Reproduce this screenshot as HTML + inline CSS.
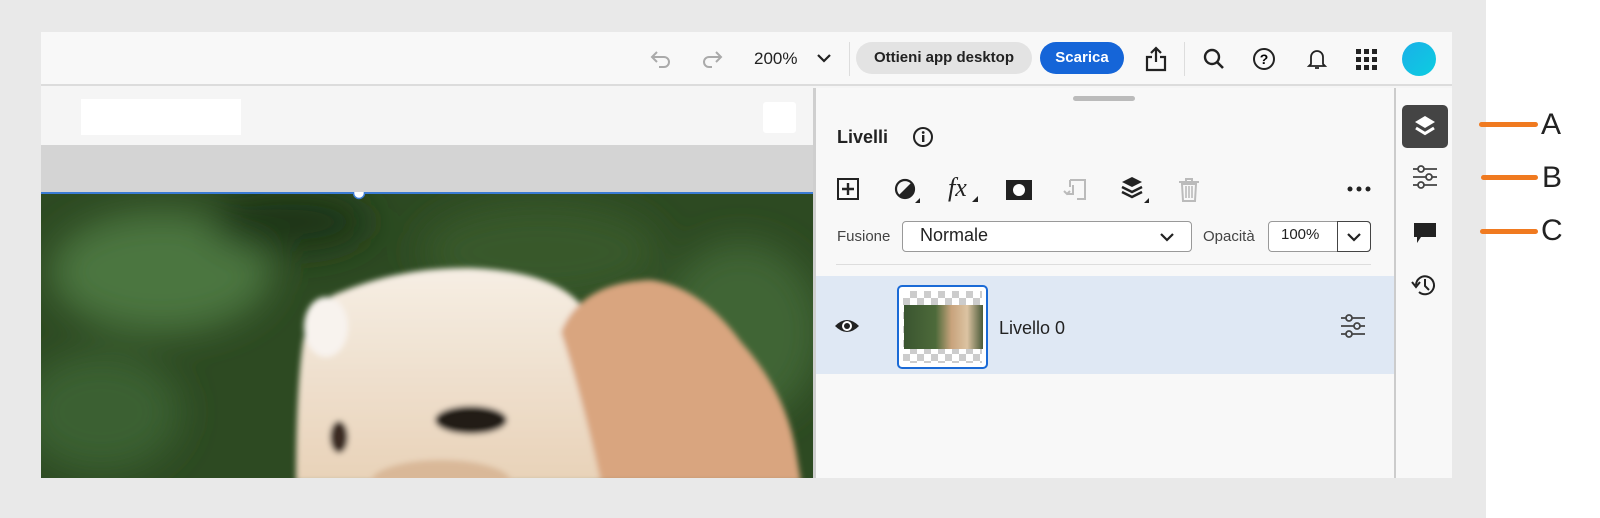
<!DOCTYPE html>
<html><head><meta charset="utf-8">
<style>
*{margin:0;padding:0;box-sizing:border-box}
body{width:1600px;height:518px;background:#fff;font-family:"Liberation Sans",sans-serif;position:relative;overflow:hidden;color:#222}
.gray{position:absolute;left:0;top:0;width:1486px;height:518px;background:#e9e9e9}
.frame{position:absolute;left:41px;top:32px;width:1411px;height:446px;background:#f5f5f5}
.tb{position:absolute;left:0;top:0;width:1411px;height:54px;background:#f8f8f8;border-bottom:2px solid #dcdcdc}
.ab{position:absolute}
.btn{position:absolute;top:10px;height:32px;border-radius:16px;font-weight:bold;font-size:15px;line-height:32px;text-align:center}
.t{position:absolute;white-space:nowrap}
</style></head><body>
<div class="gray"></div>
<div class="frame">
 <div class="tb">
  <svg class="ab" style="left:608px;top:16px" width="24" height="22" viewBox="0 0 24 22"><path d="M8 4 L3 9 L8 14 M3 9 H15 A5 5 0 0 1 15 19 H10" fill="none" stroke="#aaa" stroke-width="2"/></svg>
  <svg class="ab" style="left:659px;top:16px" width="24" height="22" viewBox="0 0 24 22"><path d="M16 4 L21 9 L16 14 M21 9 H9 A5 5 0 0 0 9 19 H12" fill="none" stroke="#aaa" stroke-width="2"/></svg>
  <div class="t" style="left:713px;top:17px;font-size:17px">200%</div>
  <svg class="ab" style="left:775px;top:20px" width="16" height="12" viewBox="0 0 16 12"><path d="M2 3 L8 9 L14 3" fill="none" stroke="#222" stroke-width="2.2"/></svg>
  <div class="ab" style="left:808px;top:10px;width:1px;height:34px;background:#ddd"></div>
  <div class="btn" style="left:815px;width:176px;background:#e3e3e3;color:#222">Ottieni app desktop</div>
  <div class="btn" style="left:999px;width:84px;background:#1565d8;color:#fff">Scarica</div>
  <svg class="ab" style="left:1102px;top:13px" width="26" height="28" viewBox="0 0 26 28"><path d="M13 3 V17 M8 8 L13 3 L18 8 M9 12 H4 V25 H22 V12 H17" fill="none" stroke="#222" stroke-width="2.2"/></svg>
  <div class="ab" style="left:1143px;top:10px;width:1px;height:34px;background:#ddd"></div>
  <svg class="ab" style="left:1161px;top:15px" width="24" height="24" viewBox="0 0 24 24"><circle cx="10" cy="10" r="7" fill="none" stroke="#222" stroke-width="2.4"/><path d="M15 15 L21 21" stroke="#222" stroke-width="2.6"/></svg>
  <svg class="ab" style="left:1211px;top:15px" width="24" height="24" viewBox="0 0 24 24"><circle cx="12" cy="12" r="10" fill="none" stroke="#222" stroke-width="2"/><text x="12" y="17" font-size="14" font-weight="bold" text-anchor="middle" font-family="Liberation Sans">?</text></svg>
  <svg class="ab" style="left:1264px;top:15px" width="24" height="24" viewBox="0 0 24 24"><path d="M6 17 V10 A6 6 0 0 1 18 10 V17 L20 19 H4 Z M10 21 H14" fill="none" stroke="#222" stroke-width="1.8"/></svg>
  <svg class="ab" style="left:1314px;top:16px" width="24" height="24" viewBox="0 0 24 24"><g fill="#222"><rect x="1" y="1" width="5" height="5"/><rect x="9" y="1" width="5" height="5"/><rect x="17" y="1" width="5" height="5"/><rect x="1" y="9" width="5" height="5"/><rect x="9" y="9" width="5" height="5"/><rect x="17" y="9" width="5" height="5"/><rect x="1" y="17" width="5" height="5"/><rect x="9" y="17" width="5" height="5"/><rect x="17" y="17" width="5" height="5"/></g></svg>
  <div class="ab" style="left:1361px;top:10px;width:34px;height:34px;border-radius:50%;background:linear-gradient(135deg,#1ab0e8,#0ccde0)"></div>
 </div>
 <div class="ab" style="left:0;top:56px;width:772px;height:57px;background:#f5f5f5"></div>
 <div class="ab" style="left:40px;top:67px;width:160px;height:36px;background:#fff"></div>
 <div class="ab" style="left:722px;top:70px;width:33px;height:31px;background:#fff;border-radius:3px"></div>
 <div class="ab" style="left:0;top:113px;width:772px;height:47px;background:#d4d4d4"></div>
 <svg class="ab" style="left:0;top:160px" width="772" height="286" viewBox="0 0 772 286">
  <defs><filter id="b"><feGaussianBlur stdDeviation="18"/></filter><filter id="s"><feGaussianBlur stdDeviation="3"/></filter>
  <linearGradient id="hg" x1="0" y1="0" x2="0" y2="1"><stop offset="0" stop-color="#f6eee4"/><stop offset="1" stop-color="#e8d2b8"/></linearGradient></defs>
  <rect width="772" height="286" fill="#2d4a22"/>
  <g filter="url(#b)">
   <ellipse cx="120" cy="80" rx="110" ry="60" fill="#4c7640"/>
   <ellipse cx="60" cy="220" rx="80" ry="60" fill="#3a6030"/>
   <ellipse cx="500" cy="60" rx="120" ry="50" fill="#37582c"/>
   <ellipse cx="700" cy="140" rx="80" ry="90" fill="#3f6535"/>
   <ellipse cx="250" cy="30" rx="80" ry="30" fill="#1e3518"/>
  </g>
  <g filter="url(#s)">
   <path d="M255 290 Q255 200 262 150 Q270 110 300 100 Q360 75 430 76 Q520 80 545 120 L560 290 Z" fill="url(#hg)"/>
   <path d="M520 140 Q540 90 610 88 Q660 95 700 150 Q745 200 755 260 L760 290 L560 290 Q540 200 520 140Z" fill="#d9a57f"/>
   <ellipse cx="285" cy="135" rx="22" ry="30" fill="#f8f3ee"/>
   <ellipse cx="430" cy="228" rx="36" ry="14" fill="#241a16"/>
   <ellipse cx="298" cy="245" rx="9" ry="16" fill="#3a2a22"/>
   <ellipse cx="400" cy="290" rx="70" ry="22" fill="#d9b898"/>
  </g>
  <rect y="0" width="772" height="2" fill="#3b7bd4"/>
  <circle cx="318" cy="1" r="5.5" fill="#fff" stroke="#3b7bd4" stroke-width="1.5"/>
 </svg>
 <div class="ab" style="left:772px;top:56px;width:3px;height:390px;background:#cfcfcf"></div>
 <div class="ab" style="left:775px;top:56px;width:578px;height:390px;background:#f8f8f8"></div>
 <div class="ab" style="left:1032px;top:64px;width:62px;height:5px;border-radius:3px;background:#bbb"></div>
 <div class="t" style="left:796px;top:95px;font-size:18px;font-weight:bold">Livelli</div>
 <svg class="ab" style="left:871px;top:94px" width="22" height="22" viewBox="0 0 22 22"><circle cx="11" cy="11" r="9" fill="none" stroke="#222" stroke-width="2"/><rect x="10" y="9" width="2.4" height="7" fill="#222"/><circle cx="11.2" cy="6.5" r="1.4" fill="#222"/></svg>
 <svg class="ab" style="left:795px;top:145px" width="24" height="24" viewBox="0 0 24 24"><rect x="2" y="2" width="20" height="20" fill="none" stroke="#222" stroke-width="2"/><path d="M12 6 V18 M6 12 H18" stroke="#222" stroke-width="2.4"/></svg>
 <svg class="ab" style="left:852px;top:145px" width="30" height="28" viewBox="0 0 30 28"><circle cx="12" cy="12" r="9" fill="none" stroke="#222" stroke-width="2.2"/><path d="M5.6 18.4 A9 9 0 0 0 18.4 5.6 Z" fill="#222"/><path d="M22 26 L27 26 L27 21 Z" fill="#222"/></svg>
 <div class="t" style="left:907px;top:141px;font-size:26px;font-style:italic;font-family:'Liberation Serif',serif">fx</div>
 <svg class="ab" style="left:930px;top:163px" width="8" height="8" viewBox="0 0 8 8"><path d="M1 7 L7 7 L7 1Z" fill="#222"/></svg>
 <svg class="ab" style="left:964px;top:147px" width="28" height="22" viewBox="0 0 28 22"><rect x="1" y="1" width="26" height="20" fill="#222"/><circle cx="14" cy="11" r="6" fill="#fff"/></svg>
 <svg class="ab" style="left:1021px;top:145px" width="26" height="26" viewBox="0 0 26 26"><path d="M8 3 H23 V22 H15 M8 3 V10 M11 8 V17 H5 M2 14 L5 17 L8 14" fill="none" stroke="#bbb" stroke-width="2"/></svg>
 <svg class="ab" style="left:1079px;top:143px" width="30" height="30" viewBox="0 0 30 30"><path d="M12 2 L22 7 L12 12 L2 7 Z" fill="#222"/><path d="M2 12 L12 17 L22 12 M2 17 L12 22 L22 17" fill="none" stroke="#222" stroke-width="2.5"/><path d="M24 28 L29 28 L29 23 Z" fill="#222"/></svg>
 <svg class="ab" style="left:1137px;top:145px" width="22" height="26" viewBox="0 0 22 26"><path d="M1 5 H21 M8 5 V2 H14 V5 M4 7 L5 24 H17 L18 7 Z" fill="none" stroke="#bbb" stroke-width="2"/><path d="M8 9 V21 M11 9 V21 M14 9 V21" stroke="#bbb" stroke-width="1.6"/></svg>
 <svg class="ab" style="left:1306px;top:153px" width="24" height="8" viewBox="0 0 24 8"><circle cx="3" cy="4" r="2.5" fill="#222"/><circle cx="12" cy="4" r="2.5" fill="#222"/><circle cx="21" cy="4" r="2.5" fill="#222"/></svg>
 <div class="t" style="left:796px;top:196px;font-size:15px;color:#444">Fusione</div>
 <div class="ab" style="left:861px;top:189px;width:290px;height:31px;border:1.5px solid #999;border-radius:4px;background:#fff"></div>
 <div class="t" style="left:879px;top:193px;font-size:18px">Normale</div>
 <svg class="ab" style="left:1118px;top:199px" width="16" height="12" viewBox="0 0 16 12"><path d="M2 3 L8 9 L14 3" fill="none" stroke="#222" stroke-width="2.2"/></svg>
 <div class="t" style="left:1162px;top:196px;font-size:15px;color:#444">Opacità</div>
 <div class="ab" style="left:1227px;top:189px;width:103px;height:31px;border:1.5px solid #999;border-radius:4px;background:#fff"></div>
 <div class="ab" style="left:1296px;top:189px;width:34px;height:31px;border:1.5px solid #444;border-radius:0 4px 4px 0"></div>
 <div class="t" style="left:1240px;top:194px;font-size:15px">100%</div>
 <svg class="ab" style="left:1305px;top:199px" width="16" height="12" viewBox="0 0 16 12"><path d="M2 3 L8 9 L14 3" fill="none" stroke="#222" stroke-width="2.2"/></svg>
 <div class="ab" style="left:795px;top:232px;width:535px;height:1px;background:#ddd"></div>
 <div class="ab" style="left:775px;top:244px;width:578px;height:98px;background:#dfe8f4"></div>
 <svg class="ab" style="left:793px;top:285px" width="26" height="18" viewBox="0 0 26 18"><path d="M1 9 Q13 -3 25 9 Q13 21 1 9Z" fill="#222"/><circle cx="13" cy="9" r="5" fill="#fff"/><circle cx="13" cy="9" r="3" fill="#222"/></svg>
 <div class="ab" style="left:856px;top:253px;width:91px;height:84px;border:2px solid #1a6ad6;border-radius:5px;background:#fff;overflow:hidden">
  <div style="position:absolute;left:4px;top:4px;width:79px;height:72px;background:repeating-conic-gradient(#ccc 0 25%,#fff 0 50%) 0 0/14px 14px"></div>
  <div style="position:absolute;left:5px;top:18px;width:79px;height:44px;background:linear-gradient(90deg,#3a5530 0%,#4d6a3a 40%,#c8a37c 60%,#dcc3a2 80%,#4a5a38 100%)"></div>
 </div>
 <div class="t" style="left:958px;top:286px;font-size:18px">Livello 0</div>
 <svg class="ab" style="left:1299px;top:282px" width="26" height="24" viewBox="0 0 26 24"><g fill="none" stroke="#444" stroke-width="1.8"><path d="M1 4 H25 M1 12 H25 M1 20 H25"/><circle cx="9" cy="4" r="3" fill="#dfe8f4"/><circle cx="17" cy="12" r="3" fill="#dfe8f4"/><circle cx="9" cy="20" r="3" fill="#dfe8f4"/></g></svg>
 <div class="ab" style="left:1353px;top:56px;width:2px;height:390px;background:#ccc"></div>
 <div class="ab" style="left:1355px;top:56px;width:56px;height:390px;background:#f8f8f8"></div>
 <div class="ab" style="left:1361px;top:73px;width:46px;height:43px;border-radius:5px;background:#444"></div>
 <svg class="ab" style="left:1372px;top:82px" width="24" height="26" viewBox="0 0 24 26"><path d="M12 2 L22 8 L12 14 L2 8 Z" fill="#fff"/><path d="M3 14 L12 19.5 L21 14" fill="none" stroke="#fff" stroke-width="3"/></svg>
 <svg class="ab" style="left:1371px;top:133px" width="26" height="24" viewBox="0 0 26 24"><g fill="none" stroke="#444" stroke-width="1.8"><path d="M1 4 H25 M1 12 H25 M1 20 H25"/><circle cx="9" cy="4" r="3" fill="#f8f8f8"/><circle cx="17" cy="12" r="3" fill="#f8f8f8"/><circle cx="9" cy="20" r="3" fill="#f8f8f8"/></g></svg>
 <svg class="ab" style="left:1371px;top:189px" width="26" height="24" viewBox="0 0 26 24"><path d="M2 2 H24 V16 H9 L5 22 V16 H2 Z" fill="#222"/></svg>
 <svg class="ab" style="left:1370px;top:240px" width="28" height="26" viewBox="0 0 28 26"><path d="M5 13 A9 9 0 1 1 8 20" fill="none" stroke="#222" stroke-width="2"/><path d="M1 10 L5 15 L9 10" fill="none" stroke="#222" stroke-width="2"/><path d="M14 7 V14 L18 18" fill="none" stroke="#222" stroke-width="2"/></svg>
</div>
<div class="ab" style="left:1479px;top:122px;width:59px;height:5px;border-radius:3px;background:#f07a20"></div>
<div class="ab" style="left:1481px;top:175px;width:57px;height:5px;border-radius:3px;background:#f07a20"></div>
<div class="ab" style="left:1480px;top:229px;width:58px;height:5px;border-radius:3px;background:#f07a20"></div>
<div class="t" style="left:1541px;top:108px;font-size:30px">A</div>
<div class="t" style="left:1542px;top:161px;font-size:30px">B</div>
<div class="t" style="left:1541px;top:214px;font-size:30px">C</div>
</body></html>
